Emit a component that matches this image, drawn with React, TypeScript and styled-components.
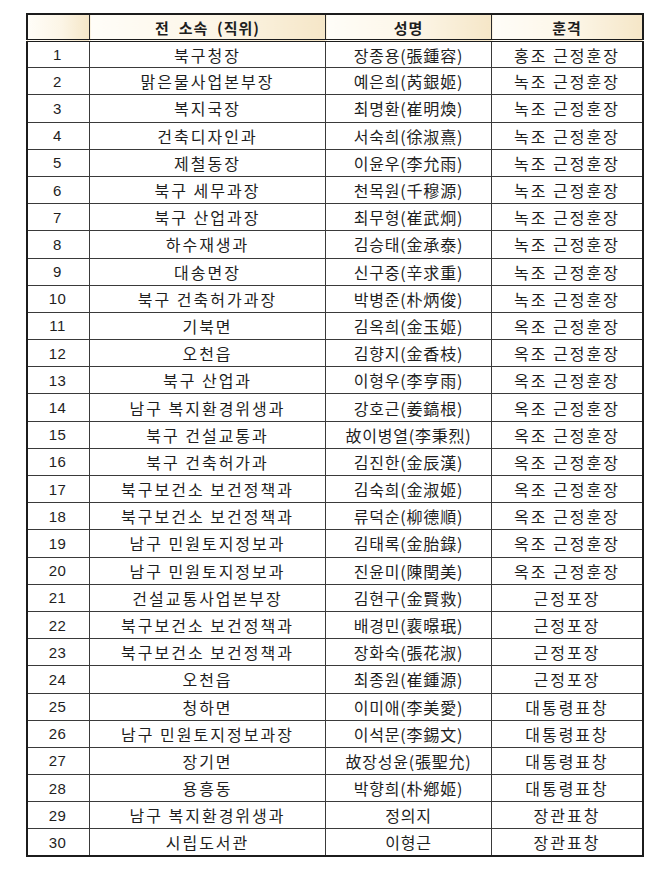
import styled, { createGlobalStyle } from "styled-components";

const GlobalStyle = createGlobalStyle`
    html, body {
        margin: 0;
        padding: 0;
        background: #ffffff;
    }
    body {
        font-family: "Noto Sans CJK KR", "Noto Sans", sans-serif;
        color: #1e1e1e;
    }
`;

const Page = styled.div`
    width: 660px;
    height: 890px;
    padding: 13px 0 0 26px;
    box-sizing: border-box;
`;

const Table = styled.table`
    width: 611px;
    border-collapse: collapse;
    table-layout: fixed;
    border: 2px solid #1c1c1c;
`;

const HeadCell = styled.th<{ $w: number }>`
    width: ${(p) => p.$w}px;
    height: 24px;
    padding: 0;
    border: 1px solid #2a2a2a;
    border-bottom: 3px double #1c1c1c;
    background: linear-gradient(to right, #fffdf8 0%, #fcf5e6 55%, #f5e6c7 100%);
    font-size: 15px;
    font-weight: 700;
    letter-spacing: 1px;
    text-align: center;
    vertical-align: middle;
    white-space: pre;
`;

const Row = styled.tr`
    height: 27.2px;
`;

const Cell = styled.td<{ $spacing?: number }>`
    padding: 0;
    border: 1px solid #3a3a3a;
    font-size: 16px;
    font-weight: 400;
    letter-spacing: ${(p) => p.$spacing ?? 2}px;
    line-height: 1;
    text-align: center;
    vertical-align: middle;
    white-space: pre;
`;

const NumCell = styled(Cell)`
    font-family: "Liberation Sans", "Noto Sans", sans-serif;
    font-size: 15px;
    letter-spacing: 0.5px;
    padding-right: 2px;
`;

type Award = {
    dept: string;
    name: string;
    medal: string;
};

const awards: Award[] = [
    { dept: "북구청장", name: "장종용(張鍾容)", medal: "홍조 근정훈장" },
    { dept: "맑은물사업본부장", name: "예은희(芮銀姬)", medal: "녹조 근정훈장" },
    { dept: "복지국장", name: "최명환(崔明煥)", medal: "녹조 근정훈장" },
    { dept: "건축디자인과", name: "서숙희(徐淑熹)", medal: "녹조 근정훈장" },
    { dept: "제철동장", name: "이윤우(李允雨)", medal: "녹조 근정훈장" },
    { dept: "북구 세무과장", name: "천목원(千穆源)", medal: "녹조 근정훈장" },
    { dept: "북구 산업과장", name: "최무형(崔武炯)", medal: "녹조 근정훈장" },
    { dept: "하수재생과", name: "김승태(金承泰)", medal: "녹조 근정훈장" },
    { dept: "대송면장", name: "신구중(辛求重)", medal: "녹조 근정훈장" },
    { dept: "북구 건축허가과장", name: "박병준(朴炳俊)", medal: "녹조 근정훈장" },
    { dept: "기북면", name: "김옥희(金玉姬)", medal: "옥조 근정훈장" },
    { dept: "오천읍", name: "김향지(金香枝)", medal: "옥조 근정훈장" },
    { dept: "북구 산업과", name: "이형우(李亨雨)", medal: "옥조 근정훈장" },
    { dept: "남구 복지환경위생과", name: "강호근(姜鎬根)", medal: "옥조 근정훈장" },
    { dept: "북구 건설교통과", name: "故이병열(李秉烈)", medal: "옥조 근정훈장" },
    { dept: "북구 건축허가과", name: "김진한(金辰漢)", medal: "옥조 근정훈장" },
    { dept: "북구보건소 보건정책과", name: "김숙희(金淑姬)", medal: "옥조 근정훈장" },
    { dept: "북구보건소 보건정책과", name: "류덕순(柳德順)", medal: "옥조 근정훈장" },
    { dept: "남구 민원토지정보과", name: "김태록(金胎錄)", medal: "옥조 근정훈장" },
    { dept: "남구 민원토지정보과", name: "진윤미(陳閏美)", medal: "옥조 근정훈장" },
    { dept: "건설교통사업본부장", name: "김현구(金賢救)", medal: "근정포장" },
    { dept: "북구보건소 보건정책과", name: "배경민(裵暻珉)", medal: "근정포장" },
    { dept: "북구보건소 보건정책과", name: "장화숙(張花淑)", medal: "근정포장" },
    { dept: "오천읍", name: "최종원(崔鍾源)", medal: "근정포장" },
    { dept: "청하면", name: "이미애(李美愛)", medal: "대통령표창" },
    { dept: "남구 민원토지정보과장", name: "이석문(李錫文)", medal: "대통령표창" },
    { dept: "장기면", name: "故장성윤(張聖允)", medal: "대통령표창" },
    { dept: "용흥동", name: "박향희(朴鄕姬)", medal: "대통령표창" },
    { dept: "남구 복지환경위생과", name: "정의지", medal: "장관표창" },
    { dept: "시립도서관", name: "이형근", medal: "장관표창" },
];

export default function App() {
    return (
        <Page>
            <GlobalStyle />
            <Table>
                <thead>
                    <tr>
                        <HeadCell $w={61} />
                        <HeadCell $w={235}>{"전  소속  (직위)"}</HeadCell>
                        <HeadCell $w={165}>성명</HeadCell>
                        <HeadCell $w={150}>훈격</HeadCell>
                    </tr>
                </thead>
                <tbody>
                    {awards.map((item, index) => (
                        <Row key={index}>
                            <NumCell>{index + 1}</NumCell>
                            <Cell>{item.dept}</Cell>
                            <Cell $spacing={0.8}>{item.name}</Cell>
                            <Cell>{item.medal}</Cell>
                        </Row>
                    ))}
                </tbody>
            </Table>
        </Page>
    );
}
